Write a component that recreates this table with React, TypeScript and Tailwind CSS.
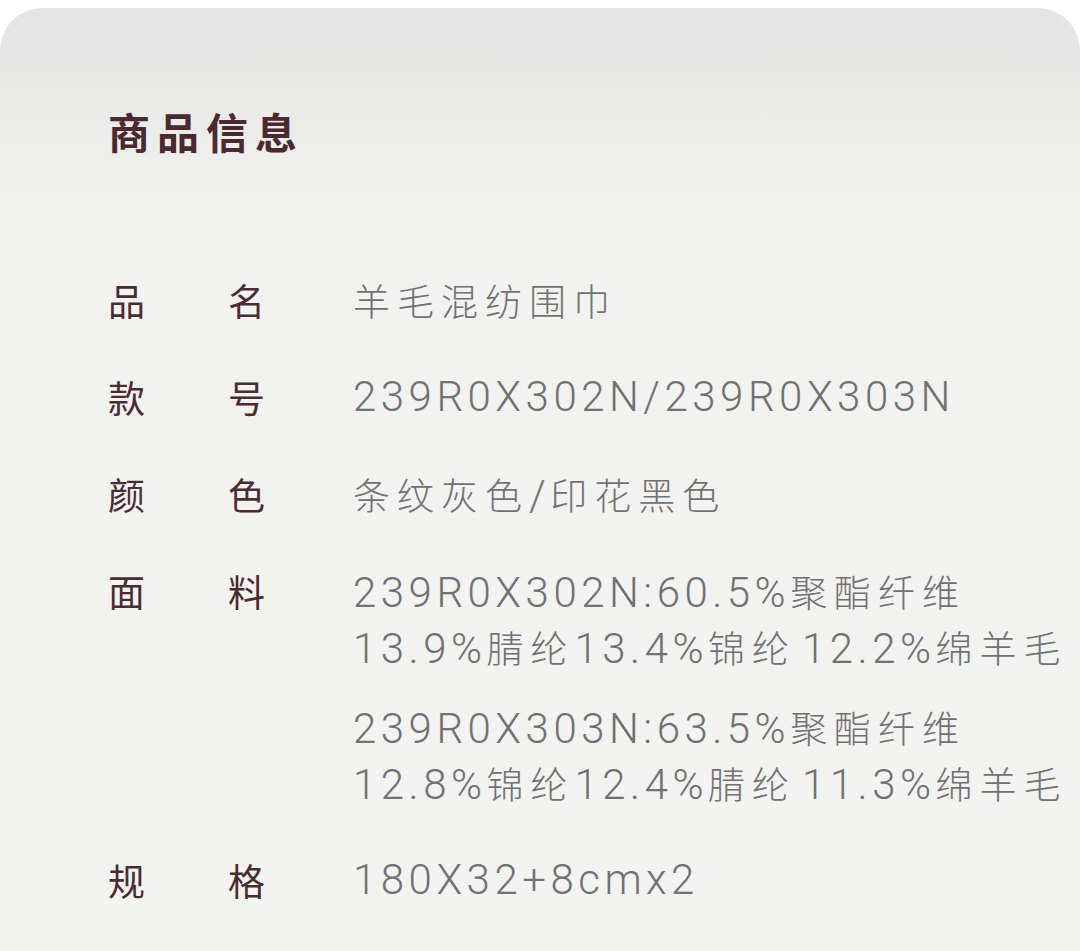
import React from "react";

const CJK = /([\u3000-\u9fff\uff00-\uffef]+| )/;
const CJK_ONLY = /[\u3000-\u9fff\uff00-\uffef]/;

function Mixed({ text }: { text: string }) {
  const parts = text.split(CJK).filter((p) => p.length > 0);
  return (
    <>
      {parts.map((p, i) =>
        p === " " ? (
          <span key={i} className="inline-block w-[6px]"> </span>
        ) : CJK_ONLY.test(p) ? (
          <span
            key={i}
            className="text-[37px] tracking-[7px] font-light"
            style={{ fontFamily: '"Noto Sans CJK SC", sans-serif' }}
          >
            {p}
          </span>
        ) : (
          <span
            key={i}
            className="text-[42px] tracking-[4.5px] font-light"
            style={{ fontFamily: 'Roboto, "Noto Sans CJK SC", sans-serif' }}
          >
            {p}
          </span>
        )
      )}
    </>
  );
}

function Row({ a, b, lines }: { a: string; b: string; lines: string[][] }) {
  return (
    <div className="flex items-start">
      <div className="flex w-[245px] shrink-0 text-[37px] leading-[56px] text-[#4a2c33] font-['Noto_Sans_CJK_SC',sans-serif]">
        <span className="w-[120px]">{a}</span>
        <span>{b}</span>
      </div>
      <div className="flex flex-col gap-[24px] text-[#717171] whitespace-nowrap">
        {lines.map((para, i) => (
          <div key={i} className="flex flex-col">
            {para.map((l, j) => (
              <div key={j} className="leading-[56px] h-[56px]">
                <Mixed text={l} />
              </div>
            ))}
          </div>
        ))}
      </div>
    </div>
  );
}

export default function App() {
  return (
    <div className="w-[1080px] h-[951px] bg-white pt-[8px] overflow-hidden">
      <div className="h-[943px] rounded-t-[42px] bg-[linear-gradient(180deg,#e4e4e4_0px,#eeeeed_150px,#f2f2f1_260px,#f3f3f2_100%)] pl-[108px] pt-[98px]">
        <h1 className="text-[42px] leading-[50px] font-bold tracking-[7px] text-[#4a2a31] font-['Noto_Sans_CJK_SC',sans-serif]">
          商品信息
        </h1>
        <div className="mt-[116px] flex flex-col gap-[41px]">
          <Row a="品" b="名" lines={[["羊毛混纺围巾"]]} />
          <Row a="款" b="号" lines={[["239R0X302N/239R0X303N"]]} />
          <Row a="颜" b="色" lines={[["条纹灰色/印花黑色"]]} />
          <Row
            a="面"
            b="料"
            lines={[
              ["239R0X302N:60.5%聚酯纤维", "13.9%腈纶13.4%锦纶 12.2%绵羊毛"],
              ["239R0X303N:63.5%聚酯纤维", "12.8%锦纶12.4%腈纶 11.3%绵羊毛"],
            ]}
          />
          <Row a="规" b="格" lines={[["180X32+8cmx2"]]} />
        </div>
      </div>
    </div>
  );
}
